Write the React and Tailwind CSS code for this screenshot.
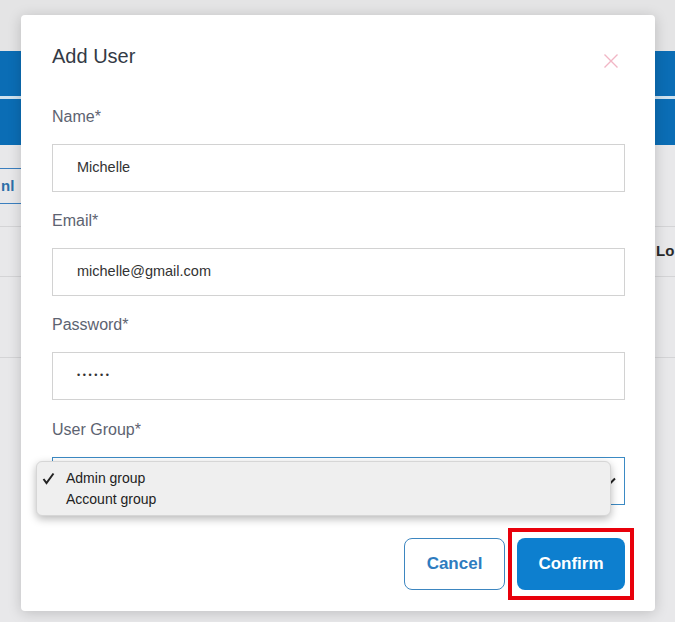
import React from 'react';

const fields = [
  { label: 'Name*', value: 'Michelle' },
  { label: 'Email*', value: 'michelle@gmail.com' },
  { label: 'Password*', value: '••••••', secret: true },
];

function BackgroundPage() {
  return (
    <div className="flex h-[622px] w-[675px] flex-col overflow-hidden bg-[#e8e8ea]">
      <div className="h-[51px] bg-[#e4e4e5]" />
      <div className="h-[45px] bg-[#0b6db5]" />
      <div className="h-[3px] bg-[#cfe2ef]" />
      <div className="h-[46px] bg-[#0b6db5]" />
      <div className="pt-[23px]">
        <div className="flex h-[36px] w-[140px] items-center border-y border-[#3b7fbf] pl-[1px] text-[15px] font-bold text-[#2c6fa8]">
          nl
        </div>
      </div>
      <div className="mt-[22px] flex h-[51px] items-center border-y border-[#d4d4d6]">
        <div className="w-[656px] shrink-0" />
        <span className="text-[15px] font-bold text-[#2a2a2a]">Lo</span>
      </div>
      <div className="h-[81px] border-b border-[#d4d4d6]" />
    </div>
  );
}

function Field({ label, value, secret }) {
  return (
    <div className="flex flex-col">
      <label className="text-[16px] leading-[20px] text-[#5d6371]">{label}</label>
      <div className="mt-[17px] flex h-[48px] items-center border border-[#d2d2d2] pl-[24px]">
        <span
          className={
            secret
              ? 'text-[9px] tracking-[2.6px] text-[#333]'
              : 'text-[14.5px] text-[#333]'
          }
        >
          {value}
        </span>
      </div>
    </div>
  );
}

export default function App() {
  return (
    <div className="relative h-[622px] w-[675px] overflow-hidden font-['Liberation_Sans',Arial,sans-serif]">
      <BackgroundPage />

      <div className="absolute left-[21px] top-[15px] flex h-[596px] w-[634px] flex-col rounded-[4px] bg-white pl-[31px] pr-[30px] pt-[29px] shadow-[0_2px_14px_rgba(0,0,0,0.18)]">
        <div className="flex h-[24px] items-center justify-between">
          <h2 className="text-[20px] leading-[24px] text-[#333a45]">Add User</h2>
          <svg width="16" height="16" viewBox="0 0 16 16" className="mr-[6px] mt-[9px]">
            <path d="M1.5 1.5 L14.5 14.5 M14.5 1.5 L1.5 14.5" stroke="#f1b6c5" strokeWidth="1.4" fill="none" />
          </svg>
        </div>

        <div className="mt-[39px] flex flex-col gap-[19px]">
          {fields.map((f) => (
            <Field key={f.label} {...f} />
          ))}
        </div>

        <div className="mt-[20px] flex flex-col">
          <label className="text-[16px] leading-[20px] text-[#5d6371]">User Group*</label>
          <div className="relative mt-[17px] flex h-[48px] items-center justify-end border border-[#3b8ac4] pr-[8px]">
            <svg width="12" height="8" viewBox="0 0 12 8">
              <path d="M1 1.5 L6 6.5 L11 1.5" stroke="#222" strokeWidth="2" fill="none" />
            </svg>

            <div className="absolute left-[-17px] top-[3px] z-10 flex h-[55px] w-[575px] flex-col rounded-[6px] border border-[#d6d6d6] bg-[#efefef] pt-[6px] shadow-[0_3px_8px_rgba(0,0,0,0.28)]">
              <div className="flex h-[21px] items-center">
                <svg width="13" height="13" viewBox="0 0 13 13" className="ml-[5px] mr-[11px]">
                  <path d="M1.5 7 L4.5 11 L11.5 1.5" stroke="#222" strokeWidth="2" fill="none" />
                </svg>
                <span className="text-[14px] text-[#222]">Admin group</span>
              </div>
              <div className="flex h-[21px] items-center pl-[29px]">
                <span className="text-[14px] text-[#222]">Account group</span>
              </div>
            </div>
          </div>
        </div>

        <div className="mt-[33px] flex items-center justify-end">
          <button className="h-[52px] w-[101px] rounded-[8px] border-[1.5px] border-[#3d86c0] bg-white text-[17px] font-bold text-[#2e7cbf]">
            Cancel
          </button>
          <div className="-my-[10px] -mr-[9px] ml-[3px] border-[4px] border-[#e8000b] py-[6px] pl-[5px] pr-[5px]">
            <button className="block h-[52px] w-[108px] rounded-[8px] bg-[#0d7fcf] text-[17px] font-bold text-white">
              Confirm
            </button>
          </div>
        </div>
      </div>
    </div>
  );
}
